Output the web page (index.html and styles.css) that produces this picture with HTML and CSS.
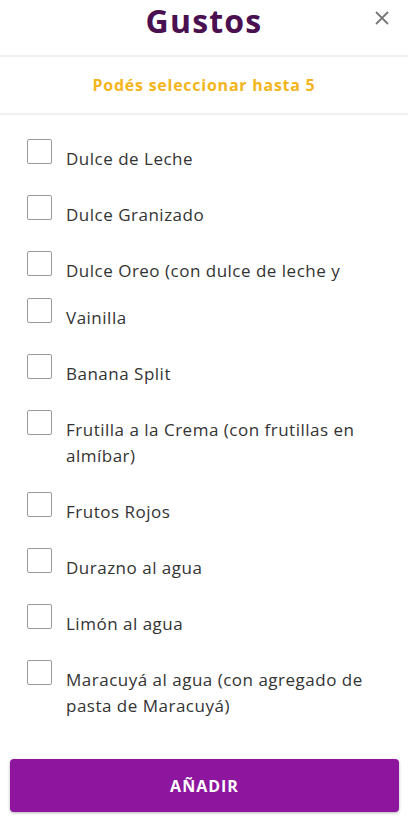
FILE: index.html
```html
<!DOCTYPE html>
<html lang="es">
<head>
    <meta charset="UTF-8">
    <meta name="viewport" content="width=device-width, initial-scale=1.0">
    <title>Gustos</title>
    <link rel="stylesheet" href="styles.css">
</head>
<body>
    <div id="modal">
        <div class="modal-header">
            <h1>Gustos</h1>
            <button class="close-button" aria-label="Cerrar">
                <svg width="14" height="14" viewBox="0 0 14 14">
                    <path d="M1 1 L13 13 M13 1 L1 13" stroke="#777" stroke-width="1.8" fill="none"/>
                </svg>
            </button>
        </div>

        <div class="modal-subheader">Podés seleccionar hasta 5</div>

        <div class="flavor-list">
            <label class="flavor"><span class="box"></span><span class="name">Dulce de Leche</span></label>
            <label class="flavor"><span class="box"></span><span class="name">Dulce Granizado</span></label>
            <label class="flavor short"><span class="box"></span><span class="name">Dulce Oreo (con dulce de leche y</span></label>
            <label class="flavor"><span class="box"></span><span class="name">Vainilla</span></label>
            <label class="flavor"><span class="box"></span><span class="name">Banana Split</span></label>
            <label class="flavor"><span class="box"></span><span class="name">Frutilla a la Crema (con frutillas en almíbar)</span></label>
            <label class="flavor"><span class="box"></span><span class="name">Frutos Rojos</span></label>
            <label class="flavor"><span class="box"></span><span class="name">Durazno al agua</span></label>
            <label class="flavor"><span class="box"></span><span class="name">Limón al agua</span></label>
            <label class="flavor"><span class="box"></span><span class="name">Maracuyá al agua (con agregado de pasta de Maracuyá)</span></label>
        </div>

        <div class="modal-footer">
            <button id="add-button">AÑADIR</button>
        </div>
    </div>
</body>
</html>
```

FILE: styles.css
```css
body {
    font-family: "Open Sans", Arial, sans-serif;
    margin: 0;
    background-color: white;
    color: #333;
}

#modal {
    width: 408px;
    height: 816px;
    display: flex;
    flex-direction: column;
}

.modal-header {
    position: relative;
    height: 55px;
    border-bottom: 2px solid #f0f0f0;
    display: flex;
    justify-content: center;
}

.modal-header h1 {
    margin: 0;
    font-size: 32px;
    font-weight: 700;
    line-height: 42px;
    letter-spacing: 1.2px;
    color: #4a1050;
}

.close-button {
    position: absolute;
    top: 8px;
    right: 16px;
    width: 20px;
    height: 20px;
    padding: 0;
    border: none;
    background: none;
    display: flex;
    align-items: center;
    justify-content: center;
}

.modal-subheader {
    height: 56px;
    border-bottom: 2px solid #f0f0f0;
    display: flex;
    align-items: center;
    justify-content: center;
    font-size: 16px;
    font-weight: 700;
    letter-spacing: 0.75px;
    color: #f4b51c;
}

.flavor-list {
    padding: 24px 20px 0 27px;
    flex: 1;
}

.flavor {
    display: flex;
    align-items: flex-start;
    gap: 14px;
    margin-bottom: 23px;
}

.flavor .box {
    flex: none;
    width: 23px;
    height: 23px;
    border: 1px solid #9a9a9a;
    border-radius: 2px;
    background: white;
}

.flavor .name {
    margin-top: 7px;
    font-size: 17px;
    line-height: 26px;
    letter-spacing: 0.5px;
}

.flavor.short {
    margin-bottom: 14px;
}

.flavor.short .name {
    white-space: nowrap;
    overflow: hidden;
}

.modal-footer {
    padding: 0 9px 4px 10px;
}

#add-button {
    width: 100%;
    height: 53px;
    border: none;
    border-radius: 4px;
    background-color: #8e169e;
    color: white;
    font-family: "Open Sans", Arial, sans-serif;
    font-size: 16px;
    font-weight: 700;
    letter-spacing: 1px;
    box-shadow: 0 1px 3px rgba(0, 0, 0, 0.3);
}
```
